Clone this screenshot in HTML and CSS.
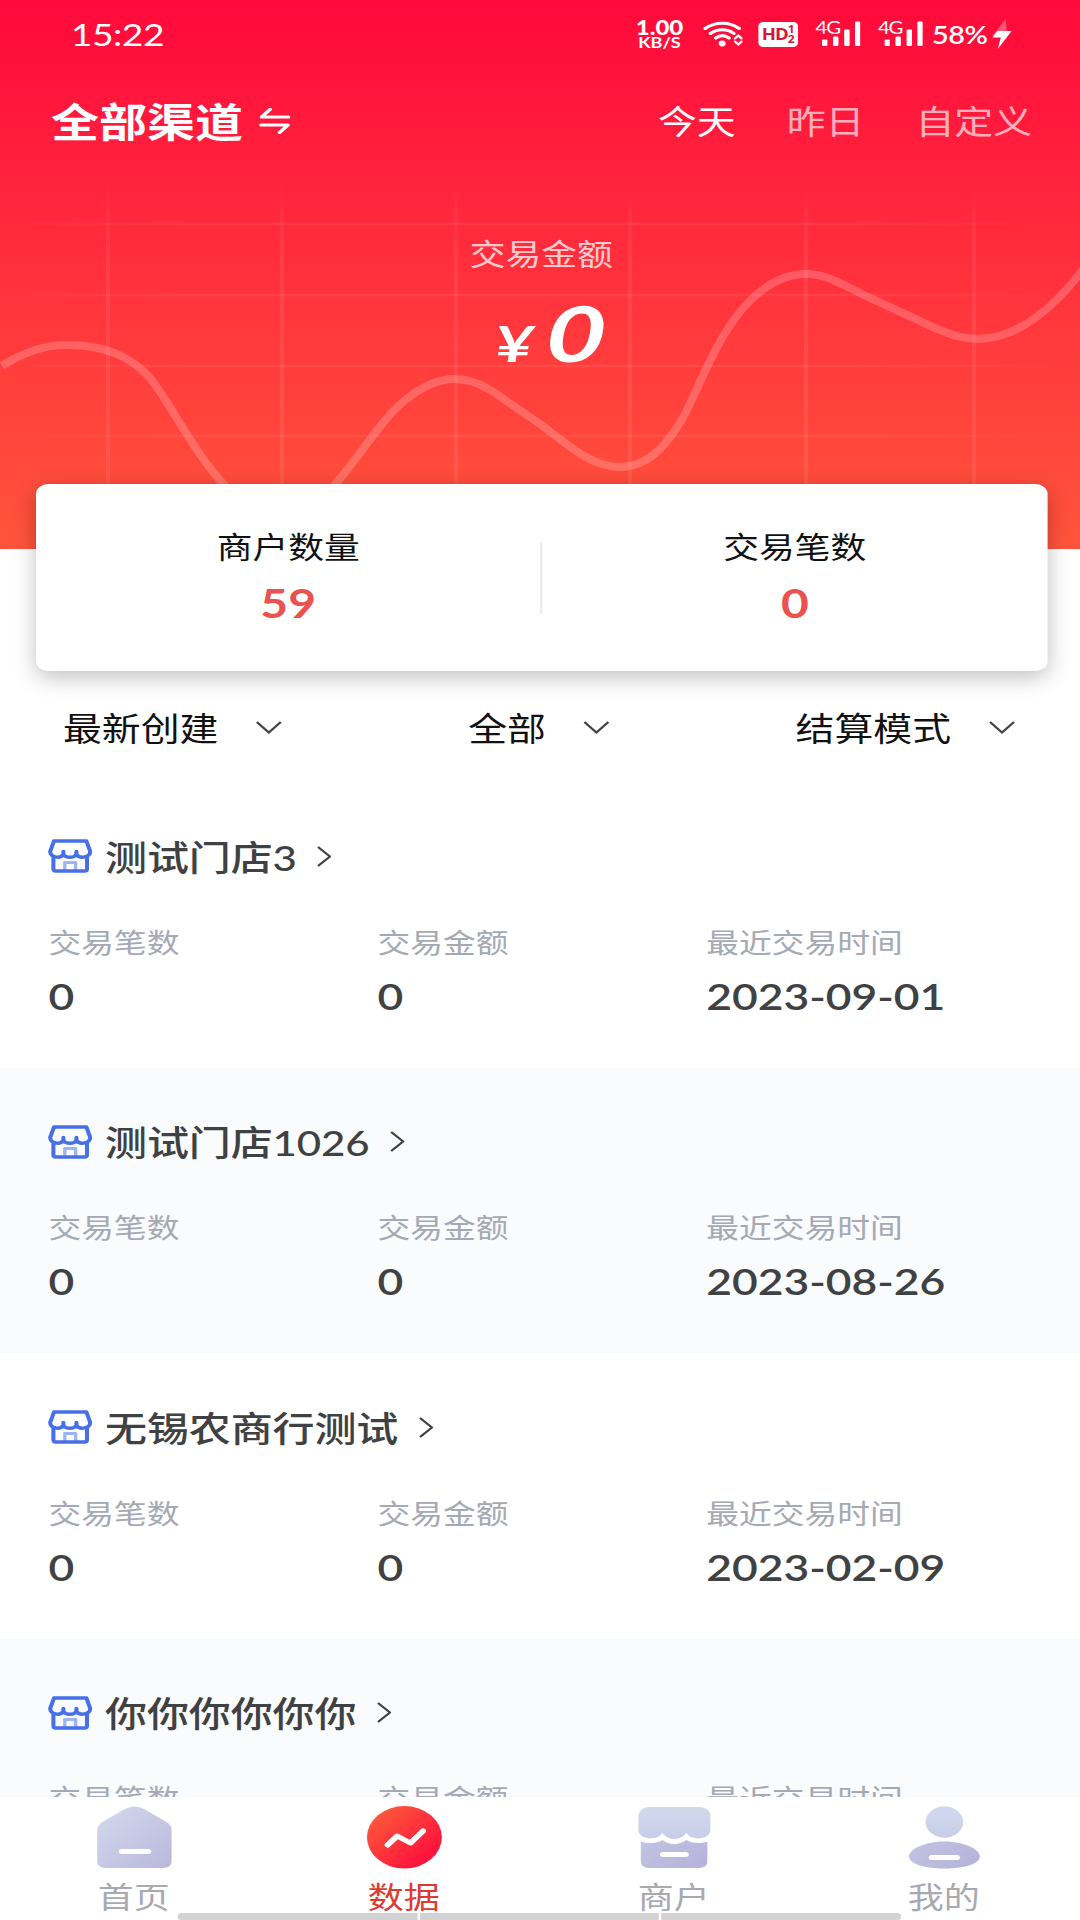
FILE: index.html
```html
<!DOCTYPE html>
<html lang="zh-CN">
<head>
    <meta charset="UTF-8">
    <meta name="viewport" content="width=device-width, initial-scale=1.0">
    <title>数据</title>
    <link rel="stylesheet" href="styles.css">
</head>
<body>
    <svg class="sprite" width="0" height="0">
        <symbol id="shop" viewBox="0 0 37 34">
            <path class="door" d="M14 32V23.500H23V32" />
            <path d="M5 2H32L35.200 12.500C35 18.500 26.500 20 23.700 15.500V12.500V15.500C21.500 19.200 15 19.200 12.800 15.500V12.500V15.500C10 20 2 18.500 1.800 12.500Z" />
            <path d="M4.500 18V30Q4.500 32 6.500 32H30.500Q32.500 32 32.500 30V18" />
        </symbol>
        <symbol id="down" viewBox="0 0 22 13">
            <path d="M1 1L11 11.500L21 1" />
        </symbol>
        <symbol id="right" viewBox="0 0 12 21">
            <path d="M1 1L11 10.500L1 20" />
        </symbol>
        <symbol id="signal" viewBox="0 0 32 26">
            <rect x="0" y="18.500" width="4.500" height="6.500" rx="1" />
            <rect x="9.200" y="15.500" width="4.500" height="9.500" rx="1" />
            <rect x="18.500" y="8.500" width="4.500" height="16.500" rx="1" />
            <rect x="27.500" y="0.500" width="4.500" height="24.500" rx="1" />
        </symbol>
    </svg>

    <div class="app">
        <div class="header">
            <svg class="chart" viewBox="0 0 1080 549" preserveAspectRatio="none">
                <defs>
                    <linearGradient id="fadeY" gradientUnits="userSpaceOnUse" x1="0" y1="165" x2="0" y2="484">
                        <stop offset="0" stop-color="#fff" stop-opacity="0" />
                        <stop offset="0.3" stop-color="#fff" stop-opacity="0.07" />
                        <stop offset="1" stop-color="#fff" stop-opacity="0.07" />
                    </linearGradient>
                    <linearGradient id="fadeX" gradientUnits="userSpaceOnUse" x1="30" y1="0" x2="1060" y2="0">
                        <stop offset="0" stop-color="#fff" stop-opacity="0.02" />
                        <stop offset="0.15" stop-color="#fff" stop-opacity="0.07" />
                        <stop offset="0.8" stop-color="#fff" stop-opacity="0.07" />
                        <stop offset="1" stop-color="#fff" stop-opacity="0" />
                    </linearGradient>
                </defs>
                <path d="M108 165V484M282 165V484M456 165V484M630 165V484M806 165V484M974 165V484" stroke="url(#fadeY)" stroke-width="4" />
                <path d="M33 224H1060M33 295H1060M33 366H1060M33 436H1060" stroke="url(#fadeX)" stroke-width="2.500" />
                <path class="curve" d="M2 366C22 353 42 345 68 345C98 345 128 353 150 378C172 405 193 452 226 487C252 520 303 520 333 487C361 455 381 420 404 401C421 387 437 379 455 379C470 379 481 384 492 391L540 424C565 442 590 467 619 467C650 467 669 442 684 416C703 378 716 340 743 308C760 289 780 274 806 274C828 274 845 286 866 296L935 328C952 335 963 339 978 339C1018 339 1056 306 1084 268" />
            </svg>

            <div class="status-bar">
                <div class="time">15:22</div>
                <div class="status-icons">
                    <div class="speed"><b>1.00</b><span>KB/S</span></div>
                    <svg class="wifi" viewBox="0 0 33 26">
                        <path d="M1.500 7.500C10 0.500 22 0.500 30 7.500M6 12.500C12 7.500 20 7.500 25.500 12.500M10.500 17C14 14 18 14 21.500 17" />
                        <circle cx="15.800" cy="22.500" r="2.900" />
                        <path class="arrows" d="M26.500 17.500L29.300 14.500L32 17.500M26.500 20.500L29.300 23.500L32 20.500" />
                    </svg>
                    <div class="hd">HD<span class="hd-num"><i>1</i><i>2</i></span></div>
                    <div class="cell"><span>4G</span><svg><use href="#signal" /></svg></div>
                    <div class="cell"><span>4G</span><svg><use href="#signal" /></svg></div>
                    <div class="battery">58%</div>
                    <svg class="bolt" viewBox="0 0 16 30">
                        <path class="bolt-top" d="M11 0L0 17H8L12 12Z" />
                        <path d="M4 12H16L4.500 30L7 18.500H0Z" />
                    </svg>
                </div>
            </div>

            <div class="top-bar">
                <div class="channel">
                    全部渠道
                    <svg viewBox="0 0 26 26"><path d="M9 1.500L2 9H24.500M1.500 17H24L17 24.500" /></svg>
                </div>
                <div class="tabs">
                    <span class="active">今天</span>
                    <span>昨日</span>
                    <span>自定义</span>
                </div>
            </div>

            <div class="amount-label">交易金额</div>
            <div class="amount"><small>¥</small><span>0</span></div>
        </div>

        <div class="card">
            <div class="card-item">
                <div class="card-label">商户数量</div>
                <div class="card-value">59</div>
            </div>
            <div class="divider"></div>
            <div class="card-item">
                <div class="card-label">交易笔数</div>
                <div class="card-value">0</div>
            </div>
        </div>

        <div class="filters">
            <div class="filter">最新创建<svg><use href="#down" /></svg></div>
            <div class="filter">全部<svg><use href="#down" /></svg></div>
            <div class="filter">结算模式<svg><use href="#down" /></svg></div>
        </div>

        <div class="list">
            <div class="shop">
                <div class="shop-name"><svg class="shop-icon"><use href="#shop" /></svg><span>测试门店3</span><svg class="arrow"><use href="#right" /></svg></div>
                <div class="shop-data">
                    <div><p>交易笔数</p><strong>0</strong></div>
                    <div><p>交易金额</p><strong>0</strong></div>
                    <div><p>最近交易时间</p><strong>2023-09-01</strong></div>
                </div>
            </div>
            <div class="shop">
                <div class="shop-name"><svg class="shop-icon"><use href="#shop" /></svg><span>测试门店1026</span><svg class="arrow"><use href="#right" /></svg></div>
                <div class="shop-data">
                    <div><p>交易笔数</p><strong>0</strong></div>
                    <div><p>交易金额</p><strong>0</strong></div>
                    <div><p>最近交易时间</p><strong>2023-08-26</strong></div>
                </div>
            </div>
            <div class="shop">
                <div class="shop-name"><svg class="shop-icon"><use href="#shop" /></svg><span>无锡农商行测试</span><svg class="arrow"><use href="#right" /></svg></div>
                <div class="shop-data">
                    <div><p>交易笔数</p><strong>0</strong></div>
                    <div><p>交易金额</p><strong>0</strong></div>
                    <div><p>最近交易时间</p><strong>2023-02-09</strong></div>
                </div>
            </div>
            <div class="shop">
                <div class="shop-name"><svg class="shop-icon"><use href="#shop" /></svg><span>你你你你你你</span><svg class="arrow"><use href="#right" /></svg></div>
                <div class="shop-data">
                    <div><p>交易笔数</p></div>
                    <div><p>交易金额</p></div>
                    <div><p>最近交易时间</p></div>
                </div>
            </div>
        </div>

        <div class="nav">
            <div class="nav-item">
                <svg viewBox="0 0 64 63">
                    <defs>
                        <linearGradient id="gray" x1="0" y1="0" x2="1" y2="1">
                            <stop offset="0" stop-color="#d3daed" />
                            <stop offset="1" stop-color="#b9b8dc" />
                        </linearGradient>
                        <linearGradient id="grayTop" x1="0" y1="0" x2="0" y2="1">
                            <stop offset="0" stop-color="#d2daee" />
                            <stop offset="1" stop-color="#c9cde8" />
                        </linearGradient>
                        <linearGradient id="grayBottom" x1="0" y1="0" x2="1" y2="0.6">
                            <stop offset="0" stop-color="#c2c5e4" />
                            <stop offset="1" stop-color="#b8b3da" />
                        </linearGradient>
                        <linearGradient id="red" x1="0.1" y1="0.1" x2="0.8" y2="0.8">
                            <stop offset="0" stop-color="#fc5a3a" />
                            <stop offset="1" stop-color="#ff143d" />
                        </linearGradient>
                    </defs>
                    <path d="M24 3Q32 -2 40 3L58 15.500Q63 19 63 24V55Q63 62 56 62H8Q1 62 1 55V24Q1 19 6 15.500Z" fill="url(#gray)" />
                    <path class="mark" d="M21.500 45.500H43.500" />
                </svg>
                <span>首页</span>
            </div>
            <div class="nav-item active">
                <svg viewBox="0 0 64 63">
                    <circle cx="32" cy="31.300" r="31.200" fill="url(#red)" />
                    <path class="mark" d="M18 39L26 30L37 37L47.500 25" />
                </svg>
                <span>数据</span>
            </div>
            <div class="nav-item">
                <svg viewBox="0 0 64 63">
                    <path d="M12 1H52Q62 1 62 11V24C62 33 47 36 42 27C37 35 27 35 22 27C17 36 2 33 2 24V11Q2 1 12 1Z" fill="url(#grayTop)" />
                    <path d="M4 35.500C11 38 18 37.500 22 34C28 39.500 36 39.500 42 34C46 37.500 53 38 59.500 35.500V55Q59.500 62 52.500 62H11Q4 62 4 55Z" fill="url(#grayBottom)" />
                    <path class="mark" d="M22.500 48.500H41.500" />
                </svg>
                <span>商户</span>
            </div>
            <div class="nav-item">
                <svg viewBox="0 0 64 63">
                    <circle cx="32" cy="16" r="15.700" fill="url(#grayTop)" />
                    <path d="M32 35.500C47 35.500 61.500 42.500 61.500 50.500C61.500 58.500 47 62.500 32 62.500C17 62.500 2.500 58.500 2.500 50.500C2.500 42.500 17 35.500 32 35.500Z" fill="url(#grayBottom)" />
                    <path class="mark" d="M21.500 51.500H42.500" />
                </svg>
                <span>我的</span>
            </div>
            <div class="gesture"><i></i><i></i><i></i></div>
        </div>
    </div>
</body>
</html>
```
FILE: styles.css
```css
* {
    box-sizing: border-box;
    margin: 0;
    padding: 0;
}
html, body {
    width: 1080px;
    height: 1920px;
    overflow: hidden;
    background: #fff;
}
/* 900px layout stretched to the full screen width */
.app {
    width: 900px;
    height: 1920px;
    display: flex;
    flex-direction: column;
    transform: scaleX(1.2);
    transform-origin: 0 0;
    overflow: hidden;
    font-family: Lato, "Noto Sans CJK SC", sans-serif;
    color: #111;
}
.sprite {
    position: absolute;
}
svg {
    display: block;
    fill: none;
    flex: none;
}

.header {
    position: relative;
    flex: none;
    height: 549px;
    background: linear-gradient(#ff0a3a 0, #ff0f3b 50px, #ff1f3d 155px, #ff373c 320px, #ff4c3c 480px, #ff543b 549px);
    color: #fff;
}
.chart {
    position: absolute;
    left: 0;
    top: 0;
    width: 900px;
    height: 549px;
}
.curve {
    stroke: rgba(255,255,255,0.2);
    stroke-width: 8;
}
.status-bar, .top-bar, .amount-label, .amount {
    position: relative;
}
.status-bar {
    display: flex;
    justify-content: space-between;
    align-items: center;
    height: 68px;
    padding: 0 57px 0 59px;
}
.time {
    font-size: 31px;
    letter-spacing: -0.4px;
}
.status-icons {
    display: flex;
    align-items: center;
}
.speed {
    width: 40px;
    margin-right: 1px;
    font-weight: bold;
    text-align: center;
}
.speed b, .speed span {
    display: block;
}
.speed b {
    font-size: 20px;
    line-height: 16px;
}
.speed span {
    font-size: 15px;
    line-height: 15px;
}
.wifi {
    width: 33px;
    height: 26px;
    margin-left: 15px;
    stroke: #fff;
    stroke-width: 3;
    stroke-linecap: round;
}
.wifi circle {
    fill: #fff;
    stroke: none;
}
.wifi .arrows {
    stroke-width: 2;
}
.hd {
    display: flex;
    align-items: center;
    justify-content: center;
    width: 33px;
    height: 25px;
    margin-left: 13px;
    border-radius: 4px;
    background: #fff;
    color: #d8133c;
    font-family: "Open Sans", sans-serif;
    font-size: 15.5px;
    font-weight: 700;
    letter-spacing: -0.8px;
}
.hd-num i {
    display: block;
    font-size: 10px;
    line-height: 10px;
    font-style: normal;
}
.cell {
    position: relative;
    width: 37px;
    height: 26px;
    margin-left: 15px;
}
.cell svg {
    width: 32px;
    height: 26px;
    margin-left: 5px;
    fill: #fff;
}
.cell span {
    position: absolute;
    left: 0;
    top: 0;
    font-size: 17px;
    line-height: 14px;
    letter-spacing: -1px;
}
.battery {
    margin-left: 8px;
    font-size: 24px;
    font-weight: 600;
    letter-spacing: -0.3px;
}
.bolt {
    width: 16px;
    height: 30px;
    margin-left: 4px;
    fill: #fff;
}
.bolt-top {
    opacity: 0.3;
}

.top-bar {
    display: flex;
    justify-content: space-between;
    align-items: center;
    height: 103px;
    padding: 0 40px 0 42.5px;
}
.channel {
    display: flex;
    align-items: center;
    font-size: 40px;
    font-weight: 700;
}
.channel svg {
    width: 26px;
    height: 26px;
    margin: 2px 0 0 13px;
    stroke: #fff;
    stroke-width: 3.2;
    stroke-linecap: round;
    stroke-linejoin: round;
}
.tabs {
    display: flex;
    gap: 42.5px;
    font-size: 32.4px;
}
.tabs span {
    opacity: 0.65;
}
.tabs .active {
    opacity: 1;
}
.amount-label {
    margin-top: 61px;
    text-align: center;
    padding-left: 2px;
    font-size: 29.8px;
    line-height: 44px;
    opacity: 0.75;
}
.amount {
    display: flex;
    justify-content: center;
    align-items: baseline;
    margin-top: 8px;
    font-size: 77px;
    line-height: 96px;
    font-weight: 700;
    font-style: italic;
    padding-left: 17px;
}
.amount small {
    font-size: 50px;
    margin-right: 15px;
    transform: scaleX(1.1);
}
.amount span {
    transform: scaleX(1.12) skewX(-4deg);
}

.card {
    position: relative;
    flex: none;
    display: flex;
    align-items: center;
    height: 187px;
    margin: -65px 27.5px 0 30px;
    background: #fff;
    border-radius: 10px;
    box-shadow: 0 6px 20px rgba(0,0,0,0.25);
}
.card-item {
    flex: 1;
    text-align: center;
}
.card-label {
    margin-top: -3px;
    font-size: 29.8px;
    line-height: 44px;
}
.card-value {
    margin-top: 9px;
    font-size: 40px;
    line-height: 50px;
    font-weight: 700;
    color: #e9524f;
}
.divider {
    width: 2px;
    height: 72px;
    background: #eee;
}

.filters {
    flex: none;
    display: flex;
    justify-content: space-between;
    align-items: center;
    height: 111px;
    padding: 0 54.5px 0 52.5px;
    font-size: 32.4px;
}
.filter {
    display: flex;
    align-items: center;
}
.filter svg {
    width: 22px;
    height: 13px;
    margin: 1px 0 0 31px;
    stroke: #444;
    stroke-width: 1.9;
}

.list {
    flex: 1;
    overflow: hidden;
}
.shop {
    height: 285.5px;
    padding: 49px 40px 0 40px;
}
.shop:nth-child(even) {
    background: #fafbfd;
}
.shop-name {
    display: flex;
    align-items: center;
    height: 50px;
    font-size: 35px;
    font-weight: 500;
    letter-spacing: -0.1px;
    color: #404143;
}
.shop-name span {
    margin-top: -2px;
}
.shop-icon {
    width: 37px;
    height: 34px;
    margin-right: 10.5px;
    stroke: #4770e8;
    stroke-width: 3.4;
    stroke-linejoin: round;
}
.door {
    stroke: #9db3f4;
    stroke-width: 2.8;
}
.arrow {
    width: 12px;
    height: 21px;
    margin-left: 17px;
    stroke: #404143;
    stroke-width: 1.9;
}
.shop-data {
    display: grid;
    grid-template-columns: 274px 274px 1fr;
    margin-top: 41.5px;
    padding-left: 0.5px;
}
.shop-data p {
    font-size: 27.3px;
    line-height: 40px;
    color: #a5a9b5;
}
.shop-data strong {
    display: block;
    margin-top: 10px;
    font-size: 37px;
    line-height: 46px;
    font-weight: 600;
    color: #404143;
}

.nav {
    position: relative;
    flex: none;
    display: flex;
    height: 123px;
    background: #fff;
}
.nav-item {
    flex: 1;
    display: flex;
    flex-direction: column;
    align-items: center;
    padding: 9px 2px 0 0;
    font-size: 30px;
    line-height: 40px;
    color: #a9a9b2;
}
.nav-item svg {
    width: 64px;
    height: 63px;
    margin-bottom: 7px;
}
.nav-item.active {
    color: #e0392f;
}
.mark {
    stroke: #fff;
    stroke-width: 5;
    stroke-linecap: round;
    stroke-linejoin: round;
}
.gesture {
    position: absolute;
    left: 148px;
    bottom: 0;
    display: flex;
    gap: 2px;
    width: 603px;
    height: 7px;
    border-radius: 4px;
    overflow: hidden;
}
.gesture i {
    flex: 1;
    background: #d3d3d3;
}
```
